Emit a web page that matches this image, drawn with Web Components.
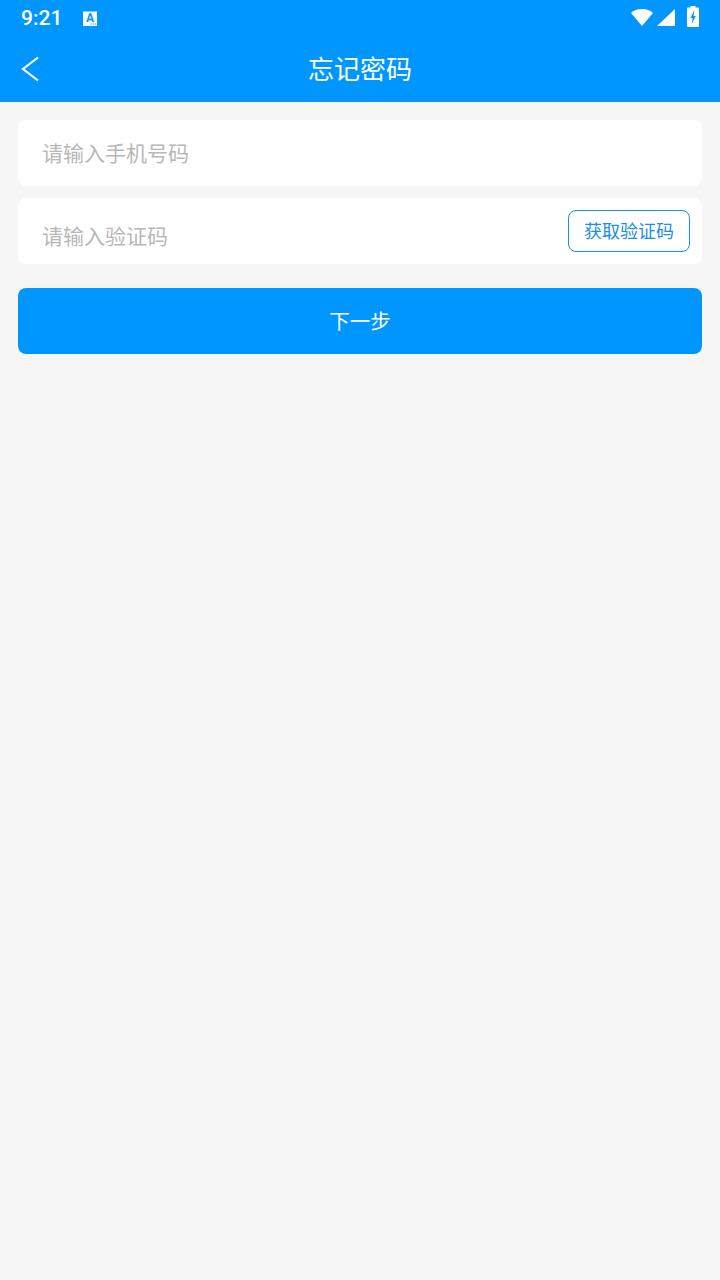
<!DOCTYPE html>
<html lang="zh">
<head>
<meta charset="utf-8">
<style>
html,body{margin:0;padding:0;background:#f6f6f6;}
body{font-family:"Noto Sans CJK SC","Noto Sans",sans-serif;width:720px;height:1280px;overflow:hidden;}
</style>
</head>
<body>
<app-header></app-header>
<main-form>
  <text-field>请输入手机号码</text-field>
  <text-field offset><span>请输入验证码</span><code-button slot="action">获取验证码</code-button></text-field>
  <primary-button>下一步</primary-button>
</main-form>
<script>
function def(name, html){
  customElements.define(name, class extends HTMLElement{
    constructor(){super();this.attachShadow({mode:'open'}).innerHTML=html;}
  });
}
def('status-bar',`<style>
:host{display:flex;align-items:center;height:36px;padding:0 21px;color:#fff;box-sizing:border-box}
.t{font:500 21px/36px Roboto,sans-serif;width:41px}
.a{margin-left:20px;display:block}
.r{margin-left:auto;display:flex;align-items:flex-start;align-self:flex-start}
svg{display:block}
</style>
<span class="t">9:21</span>
<svg class="a" width="16" height="17" viewBox="0 0 16 17"><path d="M1 1.500H15V16H1Z" fill="#fff"/><text x="8" y="11.500" text-anchor="middle" font-family="Roboto,sans-serif" font-weight="700" font-size="12" fill="#0096ff">A</text><path d="M8.500 13.500h1.200v1.100H8.500zM10.700 13.500h1.200v1.100h-1.200zM12.900 13.500h1.100v1.100h-1.100z" fill="#0096ff"/></svg>
<div class="r">
<svg style="margin-top:9px" width="22" height="17" viewBox="0 0 22 17"><path d="M0 4C2.800 1.400 6.500 0 11 0s8.200 1.400 11 4L11 17Z" fill="#fff"/></svg>
<svg style="margin-top:9px;margin-left:4px" width="18" height="17" viewBox="0 0 18 17"><path d="M18 0V17H0Z" fill="#fff"/></svg>
<svg style="margin-top:6px;margin-left:12px" width="12" height="21" viewBox="0 0 12 21"><path d="M3.500 0h5v1.500H11a1 1 0 0 1 1 1V20a1 1 0 0 1-1 1H1a1 1 0 0 1-1-1V2.500a1 1 0 0 1 1-1h2.500Z" fill="#fff"/><path d="M7.300 4 3.500 12H5.600L4.800 18 8.800 10H6.600Z" fill="#0096ff"/></svg>
</div>`);
def('nav-bar',`<style>
:host{display:flex;align-items:center;justify-content:center;height:66px;box-sizing:border-box;position:relative;color:#fff;font-size:26px;padding-bottom:4px}
svg{position:absolute;left:20px;top:19px}
</style>
<svg width="20" height="28" viewBox="0 0 20 28"><path d="M18 2.500 3 14l15 11.500" fill="none" stroke="#fff" stroke-width="2.200"/></svg><span><slot></slot></span>`);
def('app-header',`<style>:host{display:block;background:#0096ff;height:102px}</style><status-bar></status-bar><nav-bar>忘记密码</nav-bar>`);
def('main-form',`<style>:host{display:flex;flex-direction:column;padding:18px 18px 0;gap:12px}::slotted(primary-button){margin-top:12px}</style><slot></slot>`);
def('text-field',`<style>
:host{display:flex;align-items:center;justify-content:space-between;height:66px;background:#fff;border-radius:8px;padding:0 12px 2px 24px;color:#b8b8b8;font-size:21px;box-sizing:border-box}
:host([offset]){padding-bottom:0}
:host([offset]) .l{padding-top:8px}
</style><span class="l"><slot></slot></span><slot name="action"></slot>`);
def('code-button',`<style>
:host{display:flex;align-items:center;justify-content:center;width:122px;height:42px;box-sizing:border-box;border:1px solid #1a90e0;border-radius:8px;color:#1a90e0;font-size:18px;padding-bottom:2px}
</style><slot></slot>`);
def('primary-button',`<style>
:host{display:flex;align-items:center;justify-content:center;height:66px;box-sizing:border-box;background:#0096ff;border-radius:8px;color:#fff;font-size:20.500px;padding-bottom:2px}
</style><slot></slot>`);
</script>
</body>
</html>
